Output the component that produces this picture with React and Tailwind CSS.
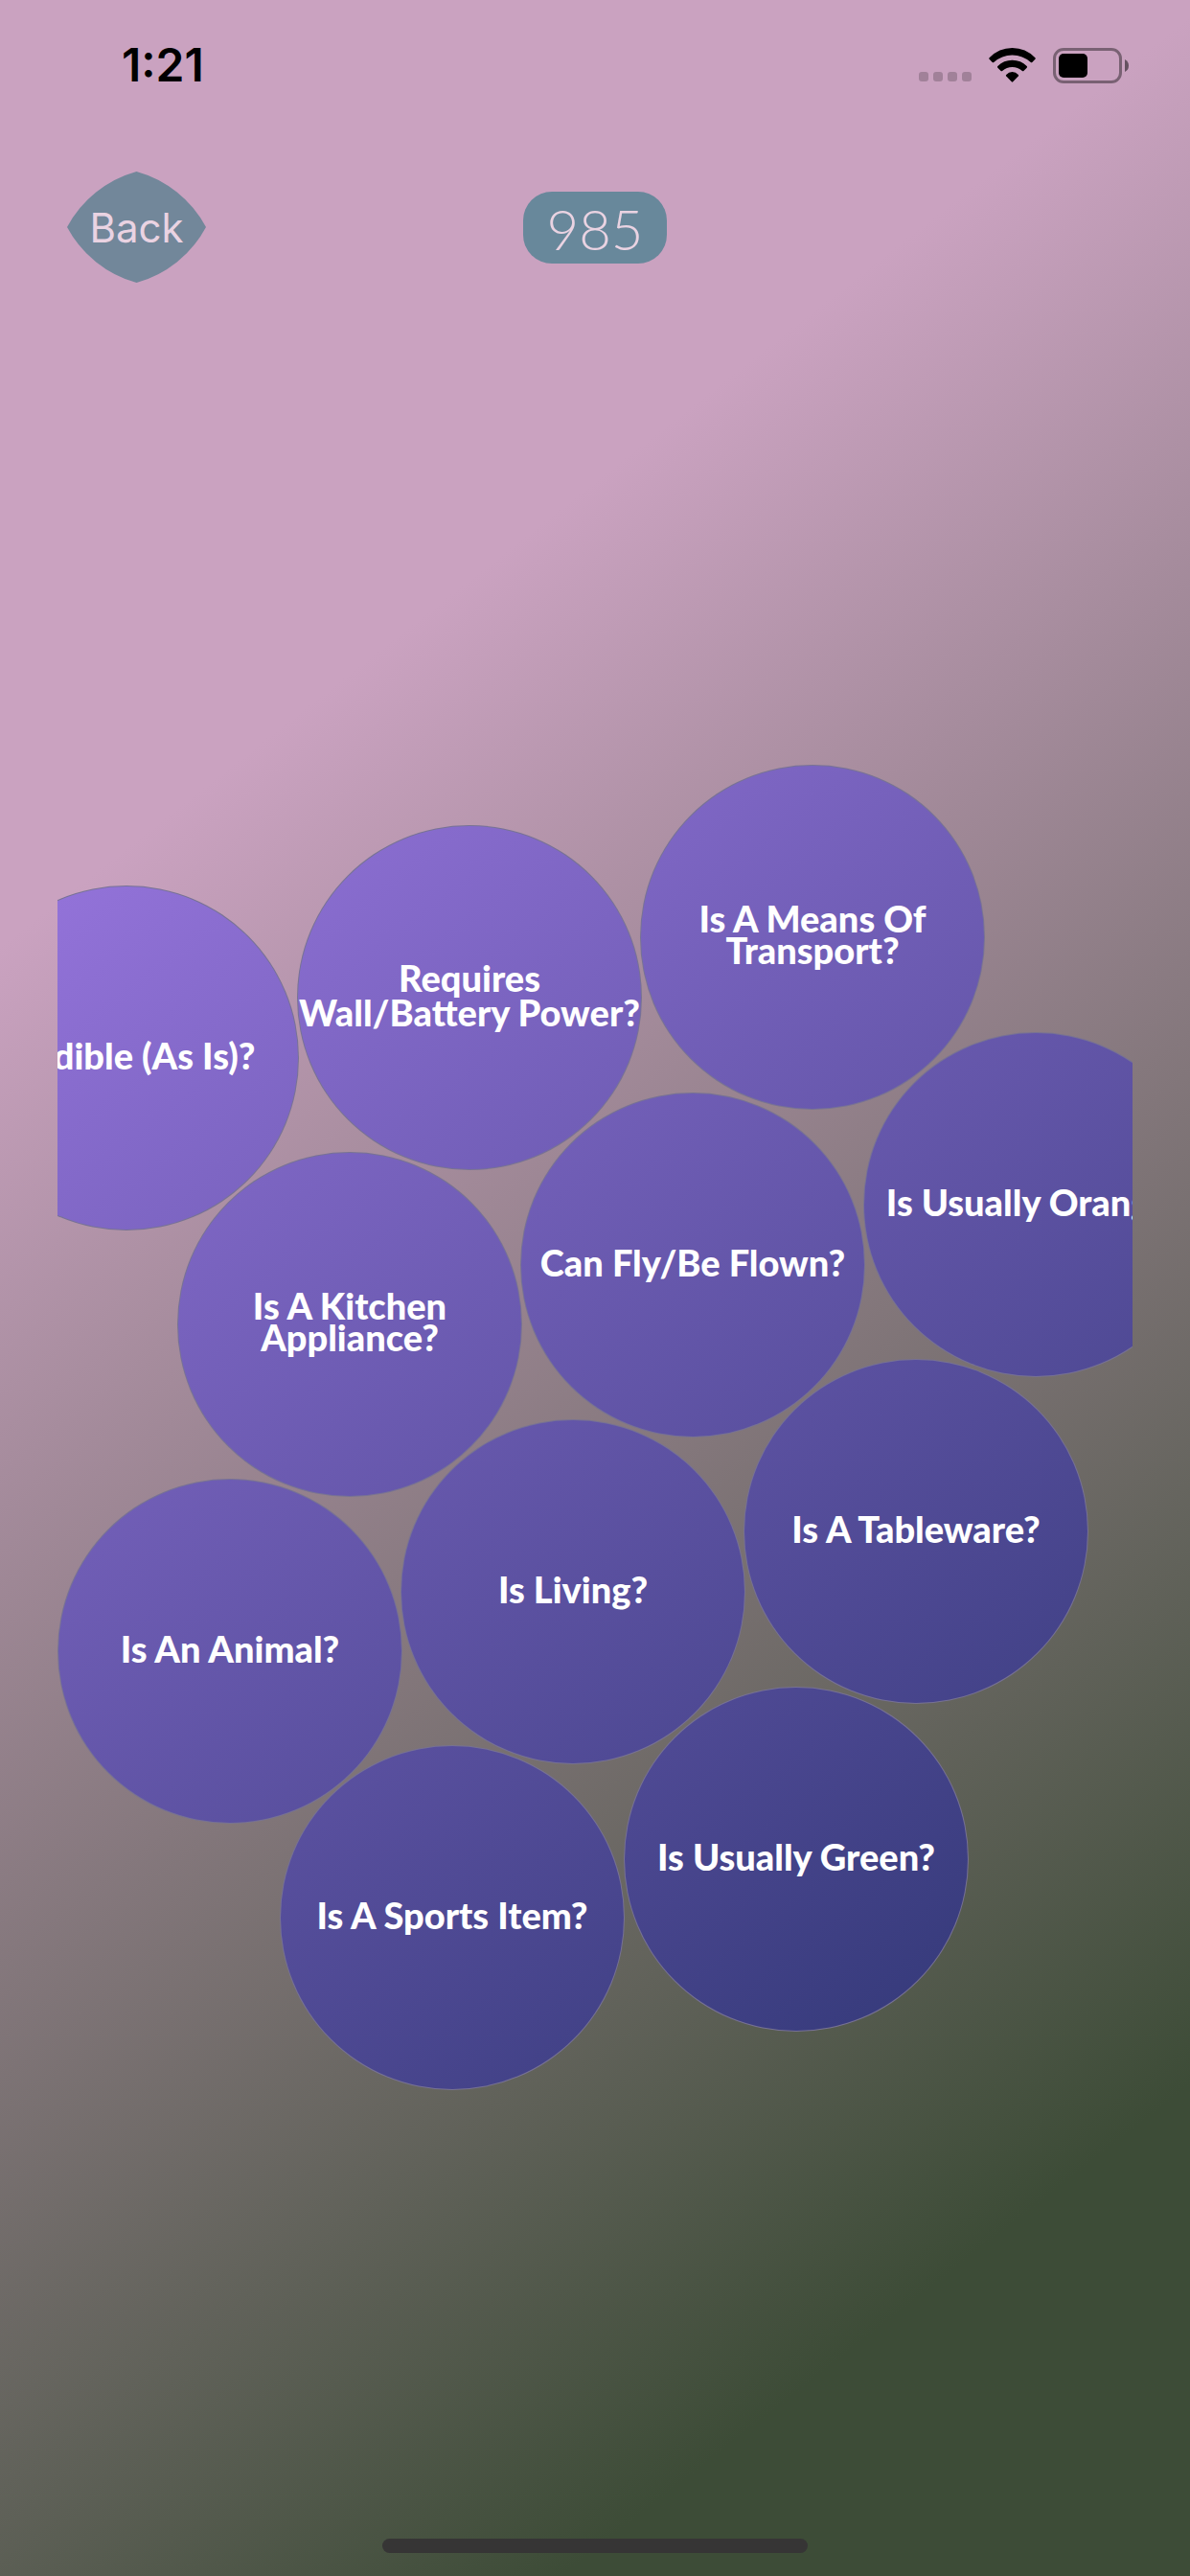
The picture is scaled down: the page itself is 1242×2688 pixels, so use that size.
const bubbles = [
  { label: "Is Edible (As Is)?", dx: -489, y: 604 },
  { label: "Requires Wall/Battery Power?", dx: -131, y: 541, lines: ["Requires", "Wall/Battery Power?"], loose: true },
  { label: "Is A Means Of Transport?", dx: 227, y: 478, lines: ["Is A Means Of", "Transport?"] },
  { label: "Is Usually Orange?", dx: 460, y: 757 },
  { label: "Can Fly/Be Flown?", dx: 102, y: 820 },
  { label: "Is A Kitchen Appliance?", dx: -256, y: 882, lines: ["Is A Kitchen", "Appliance?"] },
  { label: "Is An Animal?", dx: -381, y: 1223 },
  { label: "Is Living?", dx: -23, y: 1161 },
  { label: "Is A Tableware?", dx: 335, y: 1098 },
  { label: "Is Usually Green?", dx: 210, y: 1440 },
  { label: "Is A Sports Item?", dx: -149, y: 1501 },
];

function Bubble({ label, lines, loose, dx, y }) {
  return (
    <button
      type="button"
      aria-label={label}
      style={{ left: `calc(50% + ${dx}px)`, top: y }}
      className="absolute -m-[180px] flex size-[360px] items-center justify-center rounded-full bg-[#777294]"
    >
      <span className="flex size-[358px] shrink-0 flex-col items-center justify-center rounded-full bg-[linear-gradient(142deg,#9272d8_27%,#28326d_86%)] bg-fixed pb-1.5">
        {(lines || [label]).map((line) => (
          <span
            key={line}
            className={
              loose
                ? "text-[38px] leading-[36px] font-black whitespace-nowrap"
                : "text-[38px] leading-[33px] font-black whitespace-nowrap"
            }
          >
            {line}
          </span>
        ))}
      </span>
    </button>
  );
}

function Wifi() {
  return (
    <svg viewBox="0 0 49 36" className="h-9 w-[49px]" aria-hidden="true">
      <path d="M0.6 10.2Q10.6 0 24.5 0T48.4 10.2Q49.2 11 48.4 11.8L45.3 15Q44.6 15.7 43.8 15Q35.5 7.4 24.5 7.4T5.2 15Q4.4 15.7 3.7 15L0.6 11.8Q-0.2 11 0.6 10.2Z" />
      <path d="M9.3 19.1Q15.6 12.7 24.5 12.7T39.7 19.1Q40.5 19.9 39.7 20.7L36.4 24Q35.7 24.7 34.9 24Q30.3 20.1 24.5 20.1T14.1 24Q13.3 24.7 12.6 24L9.3 20.7Q8.5 19.9 9.3 19.1Z" />
      <path d="M18.2 28Q20.8 25.1 24.5 25.1T30.8 28Q31.5 28.8 30.8 29.6L25.2 35.3Q24.5 36 23.8 35.3L18.2 29.6Q17.5 28.8 18.2 28Z" />
    </svg>
  );
}

function Battery() {
  return (
    <svg viewBox="0 0 79 37" className="h-[37px] w-[79px]" aria-hidden="true">
      <rect x="1.5" y="1.5" width="69" height="34" rx="9.5" fill="none" stroke="#000" strokeOpacity="0.4" strokeWidth="3" />
      <rect x="6" y="6" width="30" height="25" rx="5" />
      <path d="M75 12Q79 14 79 18.5T75 25Z" fillOpacity="0.5" />
    </svg>
  );
}

export default function App() {
  return (
    <main className="flex min-h-screen flex-col bg-[linear-gradient(142deg,#caa2c0_27%,#3d4c37_86%)] font-['Lato',sans-serif] text-white">
      <div className="flex h-[136px] items-center justify-between pr-16 pl-[127px] text-black">
        <time className="font-['Inter',sans-serif] text-5xl leading-none font-semibold">1:21</time>
        <div className="flex items-center gap-[18px]">
          <div className="flex gap-[5px] pt-6">
            <span className="size-[10px] rounded-[3px] bg-black/20" />
            <span className="size-[10px] rounded-[3px] bg-black/20" />
            <span className="size-[10px] rounded-[3px] bg-black/20" />
            <span className="size-[10px] rounded-[3px] bg-black/20" />
          </div>
          <Wifi />
          <Battery />
        </div>
      </div>

      <header className="grid h-[202px] grid-cols-3 items-center px-[70px]">
        <button
          type="button"
          className="relative flex h-[116px] w-[145px] items-center justify-center font-['Inter',sans-serif] text-[42px] text-[#ead3e2]"
        >
          <svg viewBox="0 0 145 116" className="absolute inset-0 size-full" aria-hidden="true">
            <path d="M0 58A118 118 0 0 1 72.500 0A118 118 0 0 1 145 58A118 118 0 0 1 72.500 116A118 118 0 0 1 0 58Z" fill="#72879a" />
          </svg>
          <span className="relative">Back</span>
        </button>
        <output className="flex h-[75px] w-[150px] items-center justify-center justify-self-center rounded-[30px] bg-[#68889b] pt-1 text-[58px] leading-none font-light text-[#ead3e2]">
          985
        </output>
      </header>

      <section className="relative mx-[60px] mt-[162px] min-h-[1700px] flex-1 overflow-hidden" aria-label="Questions">
        {bubbles.map((bubble) => (
          <Bubble key={bubble.label} {...bubble} />
        ))}
      </section>

      <div className="flex justify-center pb-6">
        <div className="h-[15px] w-[444px] rounded-full bg-[#363535]" />
      </div>
    </main>
  );
}
